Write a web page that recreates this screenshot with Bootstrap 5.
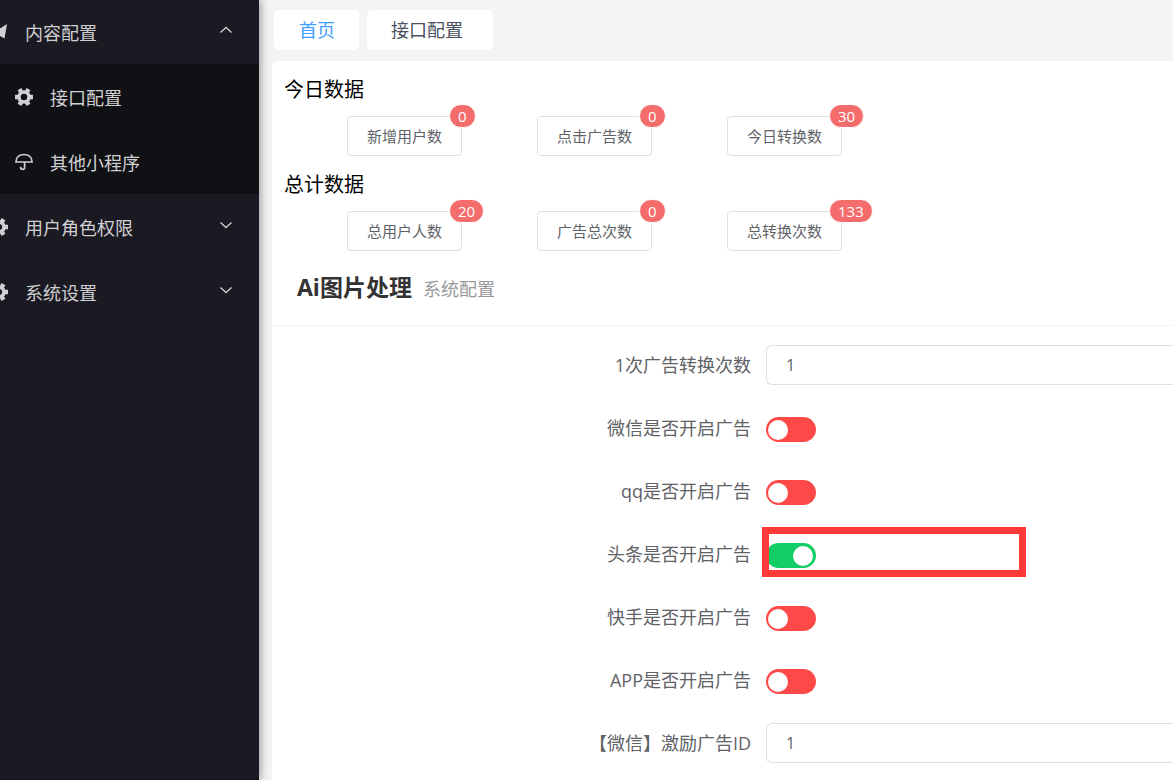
<!DOCTYPE html>
<html lang="zh-CN">
<head>
<meta charset="utf-8">
<meta name="viewport" content="width=device-width, initial-scale=1">
<title>接口配置</title>
<link href="https://cdn.jsdelivr.net/npm/bootstrap@5.3.0/dist/css/bootstrap.min.css" rel="stylesheet">
<style>
  body { font-family: "Open Sans", "Noto Sans CJK SC", sans-serif; font-size: 18px; line-height: 24px; background: #f4f4f5; color: #606266; }
  .side { flex: 0 0 259px; background: #1b1a23; border-bottom: 1px solid #121218; box-shadow: 2px 0 8px rgba(0,0,0,.35); z-index: 1; }
  .side a, .side button { height: 65px; color: #d0d0d2; font-size: 18px; line-height: 24px; text-decoration: none; }
  .side .side-top { height: 64px; }
  .side .side-group { gap: 17px; padding: 2px 26px 0 0; background: none; border: 0; text-align: left; }
  .side .side-item { gap: 17px; padding: 2px 0 0 15px; }
  .side-sub { background: #101115; }
  .side svg { flex: none; fill: currentColor; margin-bottom: 2px; }
  .side .arrow { fill: none; stroke: currentColor; margin-bottom: 6px; }
  .page { min-width: 0; padding-left: 13px; }
  .tabs { padding: 10px 2px 11px; }
  .tabs a { height: 40px; padding: 8px 30px 8px 24px; background: #fff; border-radius: 5px; color: #495060; text-decoration: none; }
  .tabs a.active { padding: 8px 24px 8px 25px; color: #409eff; }
  .panel { background: #fff; border-top-left-radius: 6px; padding-top: 17px; }
  .panel h2 { font-size: 20px; line-height: 24px; font-weight: 400; color: #000; margin: 0 0 14px 12px; }
  .stats { gap: 75px; padding-left: 75px; margin-bottom: 17px; }
  .stats button { width: 115px; height: 40px; padding: 0; background: #fff; border: 1px solid #dcdfe6; border-radius: 4px; color: #606266; font-size: 15px; line-height: 22px; }
  .count { position: absolute; top: -13px; left: 101px; min-width: 26px; height: 24px; padding: 0 8px; border: 1px solid #fff; border-radius: 12px; background: #f56c6c; color: #fff; font-size: 15px; line-height: 22px; text-align: center; }
  .head { gap: 11px; padding: 3px 25px 22px; border-bottom: 1px solid #f2f2f2; }
  .head h1 { font-size: 23px; line-height: 32px; font-weight: 700; color: #333; margin: 0; }
  .head span { color: #999; }
  .fields { gap: 23px; padding: 19px 0 17px; }
  .field { height: 40px; gap: 15px; }
  .field label { flex: 0 0 479px; text-align: right; white-space: nowrap; }
  .field .form-control { height: 40px; padding: 0 19px; border-color: #dcdfe6; color: #606266; font-size: 16px; }
  .toggle { appearance: none; width: 50px; height: 25px; margin: 3px 0 0; padding: 3px 2px; border-radius: 13px; background: #ff4949; }
  .toggle::before { content: ""; display: block; width: 20px; height: 20px; border-radius: 50%; background: #fff; }
  .toggle:checked { background: #13ce66; }
  .toggle:checked::before { margin-left: 25px; }
  .outline { position: absolute; left: 490px; top: -7px; width: 264px; height: 50px; border: 7px solid #ff3838; pointer-events: none; }
</style>
</head>
<body>
<svg class="d-none">
  <symbol id="gear" viewBox="0 0 18 18"><g fill="none" stroke="currentColor"><circle cx="9" cy="9" r="5" stroke-width="3.600"/><path stroke-width="4.400" d="M0 9h4M14 9h4M4.500 1.200l2 3.500M11.500 13.300l2 3.500M13.500 1.200l-2 3.500M6.500 13.300l-2 3.500"/></g></symbol>
</svg>
<div class="d-flex min-vh-100 overflow-hidden">
  <nav class="side">
    <button class="side-group side-top d-flex align-items-center w-100" type="button">
      <svg width="8" height="18" viewBox="10 0 8 18"><path d="M17 1 0 12l9 .5 5.500 3z"/></svg>
      <span>内容配置</span>
      <svg class="arrow ms-auto" width="14" height="8" viewBox="0 0 14 8"><path stroke-width="1.300" d="m1.500 6.500 5.500-5 5.500 5"/></svg>
    </button>
    <div class="side-sub">
      <a class="side-item d-flex align-items-center" href="#">
        <svg width="18" height="18"><use href="#gear"/></svg><span>接口配置</span>
      </a>
      <a class="side-item d-flex align-items-center" href="#">
        <svg width="18" height="18" viewBox="0 0 18 18"><path fill="none" stroke="currentColor" stroke-width="1.700" d="M.9 9C1 4.300 4.500 1.500 9 1.500S17 4.300 17.100 9zM9.600 9v5.500c0 2.400-4 2.400-4 0v-.8"/></svg><span>其他小程序</span>
      </a>
    </div>
    <button class="side-group d-flex align-items-center w-100" type="button">
      <svg width="8" height="18" viewBox="10 0 8 18"><use href="#gear" width="18" height="18"/></svg>
      <span>用户角色权限</span>
      <svg class="arrow ms-auto" width="14" height="8" viewBox="0 0 14 8"><path stroke-width="1.300" d="m1.500 1.500 5.500 5 5.500-5"/></svg>
    </button>
    <button class="side-group d-flex align-items-center w-100" type="button">
      <svg width="8" height="18" viewBox="10 0 8 18"><use href="#gear" width="18" height="18"/></svg>
      <span>系统设置</span>
      <svg class="arrow ms-auto" width="14" height="8" viewBox="0 0 14 8"><path stroke-width="1.300" d="m1.500 1.500 5.500 5 5.500-5"/></svg>
    </button>
  </nav>

  <main class="page flex-grow-1 d-flex flex-column">
    <div class="tabs d-flex gap-2">
      <a class="active" href="#">首页</a>
      <a href="#">接口配置</a>
    </div>
    <div class="panel flex-grow-1">
      <h2>今日数据</h2>
      <div class="stats d-flex">
        <button class="position-relative" type="button">新增用户数<span class="count">0</span></button>
        <button class="position-relative" type="button">点击广告数<span class="count">0</span></button>
        <button class="position-relative" type="button">今日转换数<span class="count">30</span></button>
      </div>
      <h2>总计数据</h2>
      <div class="stats d-flex">
        <button class="position-relative" type="button">总用户人数<span class="count">20</span></button>
        <button class="position-relative" type="button">广告总次数<span class="count">0</span></button>
        <button class="position-relative" type="button">总转换次数<span class="count">133</span></button>
      </div>
      <header class="head d-flex align-items-baseline">
        <h1>Ai图片处理</h1><span>系统配置</span>
      </header>
      <form class="fields d-flex flex-column">
        <div class="field d-flex align-items-center">
          <label for="times">1次广告转换次数</label>
          <input id="times" class="form-control border-end-0 rounded-end-0" type="text" value="1">
        </div>
        <div class="field d-flex align-items-center">
          <label for="wx">微信是否开启广告</label>
          <input id="wx" class="toggle" type="checkbox" role="switch">
        </div>
        <div class="field d-flex align-items-center">
          <label for="qq">qq是否开启广告</label>
          <input id="qq" class="toggle" type="checkbox" role="switch">
        </div>
        <div class="field d-flex align-items-center position-relative">
          <label for="tt">头条是否开启广告</label>
          <input id="tt" class="toggle" type="checkbox" role="switch" checked>
          <div class="outline"></div>
        </div>
        <div class="field d-flex align-items-center">
          <label for="ks">快手是否开启广告</label>
          <input id="ks" class="toggle" type="checkbox" role="switch">
        </div>
        <div class="field d-flex align-items-center">
          <label for="app">APP是否开启广告</label>
          <input id="app" class="toggle" type="checkbox" role="switch">
        </div>
        <div class="field d-flex align-items-center">
          <label for="adid">【微信】激励广告ID</label>
          <input id="adid" class="form-control border-end-0 rounded-end-0" type="text" value="1">
        </div>
      </form>
    </div>
  </main>
</div>
<script src="https://cdn.jsdelivr.net/npm/bootstrap@5.3.0/dist/js/bootstrap.bundle.min.js"></script>
</body>
</html>
